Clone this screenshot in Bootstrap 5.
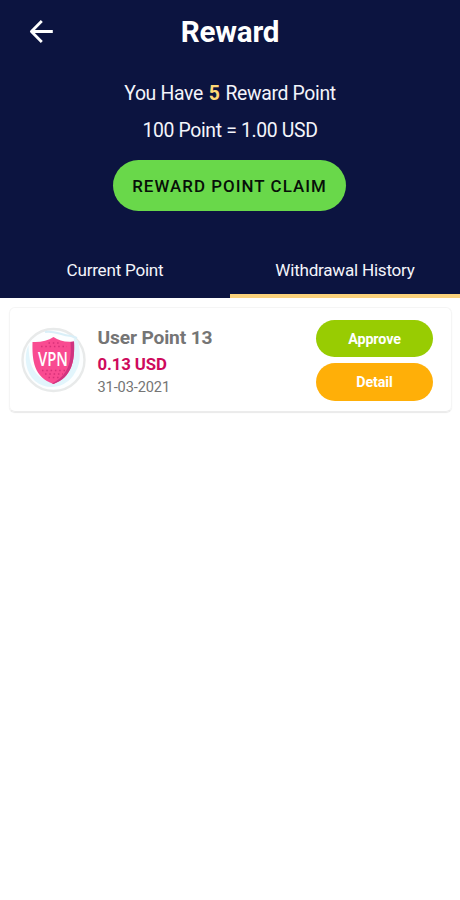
<!DOCTYPE html>
<html lang="en">
<head>
<meta charset="utf-8">
<meta name="viewport" content="width=device-width, initial-scale=1">
<title>Reward</title>
<link href="https://cdn.jsdelivr.net/npm/bootstrap@5.3.0/dist/css/bootstrap.min.css" rel="stylesheet">
<style>
body { font-family: Roboto, "Liberation Sans", sans-serif; background: #fff; min-height: 900px; }
.hero { background: #0c1440; height: 298px; color: #fff; }
.topbar { height: 64px; padding: 0 29px; }
.topbar > * { flex: 1 1 0; }
.topbar button { line-height: 0; }
.title { font-size: 29.6px; letter-spacing: -.2px; line-height: 36px; font-weight: 700; flex: 0 0 auto; }
.points { font-size: 19.4px; letter-spacing: -.35px; line-height: 37px; padding-top: 11px; color: #f4f5fb; }
.points b { color: #ffd976; margin: 0 1.5px; }
.btn.claim { width: 233px; height: 51px; margin: 11px 114px 0 113px; background: #69d84a; color: #071008; font-size: 16.9px; font-weight: 500; letter-spacing: 1.05px; padding: 2px 0 0; white-space: nowrap; }
.tabs { height: 56px; font-size: 17.1px; letter-spacing: -.24px; }
.tabs .nav-link { color: #f4f5fb; border-bottom: 4px solid transparent; padding: 5px 0 0; }
.tabs .nav-link.active { border-bottom-color: #fbd27c; }
.entry { margin: 9px 8px 0 9px; height: 105px; padding: 0 18px 0 11px; border: 1px solid #f5f5f5; border-bottom-color: #ececec; border-radius: 6px; box-shadow: 0 1px 1px #e9e9e9; }
.lines { margin-left: 11.500px; padding-top: 3px; }
.who { font-size: 19.2px; letter-spacing: -.15px; line-height: 26px; font-weight: 700; color: #757575; }
.sum { font-size: 16.8px; letter-spacing: -.12px; line-height: 26px; font-weight: 700; color: #ce0a5c; }
.day { font-size: 14.6px; letter-spacing: -.12px; line-height: 21px; color: #757575; }
.acts { gap: 6px; padding-top: 1px; }
.btn.act { width: 117px; height: 37.5px; padding: 2px 0 0; font-size: 14.3px; letter-spacing: -.1px; font-weight: 700; color: #fff; }
.approve { background: #98cc02; }
.detail { background: #ffaf08; }
.shield-word { font: 600 19px "Open Sans", Roboto, sans-serif; fill: #fff; }
</style>
</head>
<body>
<header class="hero d-flex flex-column">
  <div class="topbar d-flex align-items-center">
    <div><button class="btn p-0 border-0" aria-label="Back"><svg width="25" height="24" viewBox="0 0 25 24" fill="none" stroke="#fff" stroke-width="2.8" stroke-linejoin="round"><path d="M23.8 11.500H3M12.800 1 2.400 11.500l10.400 10.500"/></svg></button></div>
    <h1 class="title m-0">Reward</h1>
    <div></div>
  </div>
  <div class="points text-center">
    <div>You Have <b>5</b> Reward Point</div>
    <div>100 Point = 1.00 USD</div>
  </div>
  <button class="btn claim rounded-pill border-0">REWARD POINT CLAIM</button>
  <nav class="tabs nav nav-fill mt-auto">
    <a class="nav-link w-50 d-flex align-items-center justify-content-center" href="#">Current Point</a>
    <a class="nav-link w-50 active d-flex align-items-center justify-content-center" href="#">Withdrawal History</a>
  </nav>
</header>
<main>
  <article class="entry d-flex align-items-center">
    <svg width="65" height="66" viewBox="0 0 65 66" aria-label="VPN">
      <circle cx="32.500" cy="33" r="31" fill="#fcfeff" stroke="#e8eaea" stroke-width="2.400"/>
      <path d="M7.500 18C2 30 5 46 14 54c12 10 29 7 38-5 8-11 8-22 5-35l-4-4c-1 16 1 26-6 36-9 11-24 10-32 0C8 38 8 27 7.500 18Z" fill="#e2f5fc"/>
      <path d="M24 5c9-2 15 3 26 4l6 2" fill="none" stroke="#d9eff8" stroke-width="2"/>
      <path d="M32.500 10C27 14 19 15.500 11.500 15C11 34 13 50 32.500 57C51 50 54 34 53 14.500C45 15.500 38 14 32.500 10Z" fill="#f94b91"/>
      <path d="M49.500 15 53 14.500C54 34 51 50 32.500 57L31 56.400C47 49 51 35 49.500 15Z" fill="#cf3480"/>
      <g stroke="#d63078" stroke-width="1.500" stroke-dasharray="1.500 2.800">
        <path d="M27.500 16H38M20 19.500H46M21 43.500H45M24 47H42M27.500 50.500H38"/>
      </g>
      <text class="shield-word" x="17" y="39" textLength="30" lengthAdjust="spacingAndGlyphs">VPN</text>
    </svg>
    <div class="lines flex-grow-1">
      <div class="who">User Point 13</div>
      <div class="sum">0.13 USD</div>
      <div class="day">31-03-2021</div>
    </div>
    <div class="acts d-flex flex-column">
      <button class="btn act approve rounded-pill border-0">Approve</button>
      <button class="btn act detail rounded-pill border-0">Detail</button>
    </div>
  </article>
</main>
<script src="https://cdn.jsdelivr.net/npm/bootstrap@5.3.0/dist/js/bootstrap.bundle.min.js"></script>
</body>
</html>
